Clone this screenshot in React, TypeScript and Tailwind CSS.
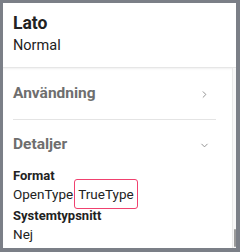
import { ChevronRight, ChevronDown } from "lucide-react";

function Section({ title, open }: { title: string; open?: boolean }) {
	return (
		<div className="flex items-center justify-between h-[50px] pr-[6px]">
			<span className="text-[15.5px] font-bold text-[#6e6e6e] leading-none">{title}</span>
			{open ? (
				<ChevronDown className="w-[11px] h-[11px] text-[#8a8a8a]" strokeWidth={2} />
			) : (
				<ChevronRight className="w-[11px] h-[11px] text-[#8a8a8a]" strokeWidth={2} />
			)}
		</div>
	);
}

function App() {
	return (
		<div
			className="w-[240px] h-[252px] bg-[#7b7f87] pl-[3px] pt-[3px] pr-[4px] pb-[4px] overflow-hidden"
			style={{ fontFamily: "Roboto, 'Noto Sans', sans-serif" }}
		>
			<div className="w-full h-full bg-white flex flex-col">
				<div className="h-[65px] px-[10px] pt-[10px] border-b border-[#e6e6e6] shrink-0">
					<div className="text-[17.5px] font-bold text-[#222] leading-[20px]">Lato</div>
					<div className="text-[14.5px] text-[#222] leading-[20px] mt-[3px]">Normal</div>
				</div>
				<div className="flex flex-1 min-h-0">
					<div className="flex-1 pl-[10px] pr-[16px] shadow-[inset_0_2px_3px_-2px_rgba(0,0,0,0.12)]">
						<div className="pt-[1px] border-b border-[#e4e4e4]">
							<Section title="Användning" />
						</div>
						<Section title="Detaljer" open />
						<div className="text-[13px] font-bold text-[#222] leading-[16px] -mt-[2px]">Format</div>
						<div className="flex items-center text-[13.5px] text-[#222] leading-[18px] mt-[1px]">
							<span>OpenType</span>
							<span className="ml-[1px] -my-[6px] px-[3px] py-[5px] border-[1.5px] border-[#f0416f] rounded-[3px] w-[64px]">
								TrueType
							</span>
						</div>
						<div className="text-[13px] font-bold text-[#222] leading-[16px] mt-[5px]">
							Systemtypsnitt
						</div>
						<div className="text-[13.5px] text-[#222] leading-[18px] mt-[1px]">Nej</div>
					</div>
					<div className="w-[4px] border-l border-[#e9e9e9] bg-[#f7f7f7] flex flex-col justify-end">
						<div className="h-[18px] w-[2px] ml-[1px] mb-[1px] bg-[#9a9a9a] rounded-full" />
					</div>
				</div>
			</div>
		</div>
	);
}

export default App;
